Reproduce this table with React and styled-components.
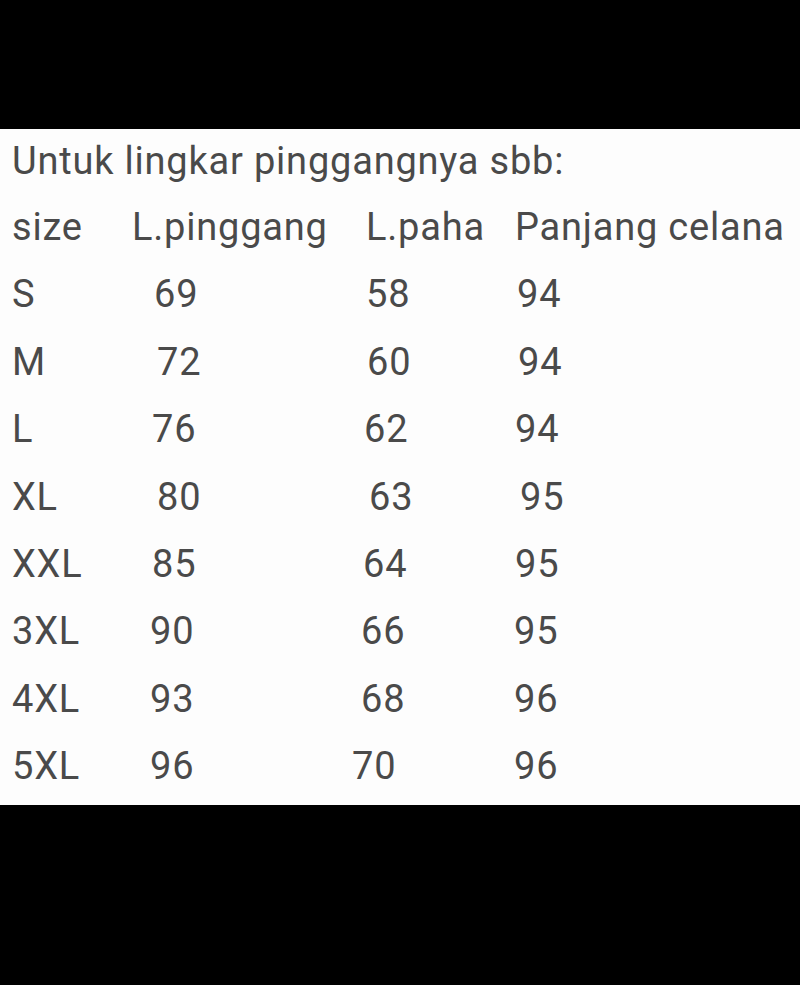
import React from 'react';
import styled, { createGlobalStyle } from 'styled-components';

const GlobalStyle = createGlobalStyle`
  html, body {
    margin: 0;
    padding: 0;
    background: #000;
  }
  body {
    width: 800px;
    height: 985px;
    overflow: hidden;
  }
`;

const Screen = styled.div`
  width: 800px;
  height: 985px;
  background: #000;
  display: flex;
  flex-direction: column;
  padding-top: 129px;
  box-sizing: border-box;
`;

const Sheet = styled.div`
  background: #fdfdfd;
  height: 676px;
  box-sizing: border-box;
  padding: 0 0 0 12px;
  font-family: Roboto, "Liberation Sans", sans-serif;
  font-size: 38px;
  letter-spacing: 0.8px;
  color: #4a4a4a;
`;

const Intro = styled.div`
  height: 65px;
  line-height: 65px;
  white-space: nowrap;
`;

const SizeTable = styled.div`
  display: grid;
  grid-template-columns: 120px 220px 162px 1fr;
  grid-auto-rows: 67.4px;
  line-height: 67.4px;
`;

const Cell = styled.div`
  padding-left: ${({ $dx }) => $dx || 0}px;
  white-space: nowrap;
`;

const header = [
  { text: 'size', dx: 0 },
  { text: 'L.pinggang', dx: 0 },
  { text: 'L.paha', dx: 14 },
  { text: 'Panjang celana', dx: 1 },
];

// nudges copy the uneven hand spacing of the original chart
const rows = [
  ['S', 69, 22, 58, 14, 94, 3],
  ['M', 72, 25, 60, 15, 94, 4],
  ['L', 76, 20, 62, 12, 94, 1],
  ['XL', 80, 25, 63, 17, 95, 6],
  ['XXL', 85, 20, 64, 11, 95, 1],
  ['3XL', 90, 18, 66, 9, 95, 0],
  ['4XL', 93, 18, 68, 9, 96, 0],
  ['5XL', 96, 18, 70, 0, 96, 0],
];

export default function App() {
  return (
    <>
      <GlobalStyle />
      <Screen>
        <Sheet>
          <Intro>Untuk lingkar pinggangnya sbb:</Intro>
          <SizeTable>
            {header.map((h) => (
              <Cell key={h.text} $dx={h.dx}>{h.text}</Cell>
            ))}
            {rows.map(([size, waist, dWaist, thigh, dThigh, length, dLength]) => (
              <React.Fragment key={size}>
                <Cell>{size}</Cell>
                <Cell $dx={dWaist}>{waist}</Cell>
                <Cell $dx={dThigh}>{thigh}</Cell>
                <Cell $dx={dLength}>{length}</Cell>
              </React.Fragment>
            ))}
          </SizeTable>
        </Sheet>
      </Screen>
    </>
  );
}
